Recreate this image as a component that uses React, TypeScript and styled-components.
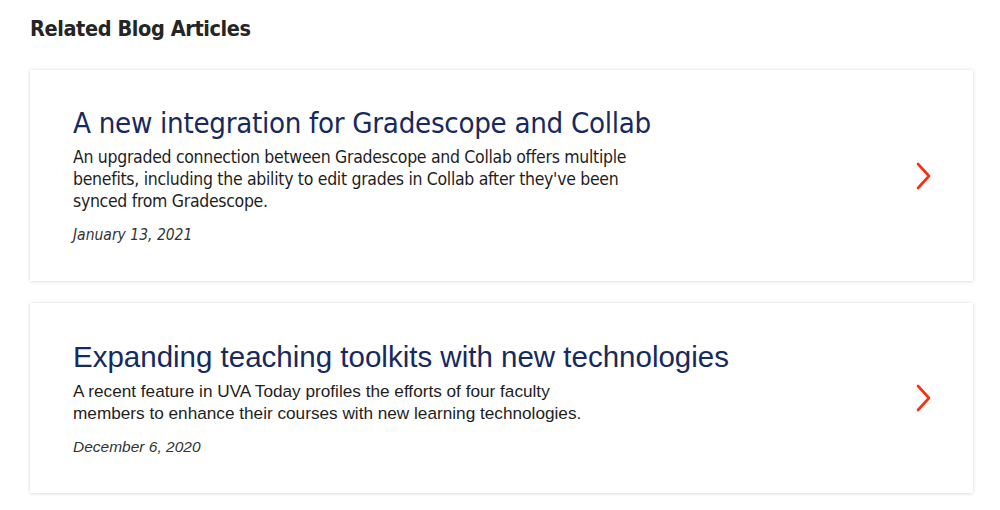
import React from "react";
import styled, { createGlobalStyle } from "styled-components";

const Global = createGlobalStyle`
  html, body { margin: 0; padding: 0; background: #ffffff; }
  body { width: 1000px; height: 510px; overflow: hidden; }
`;

const Page = styled.div`
  padding: 14px 27px 0 30px;
  display: flex;
  flex-direction: column;
`;

const Heading = styled.h2`
  margin: 0 0 26px 0;
  font-family: "DejaVu Sans Condensed", "DejaVu Sans", sans-serif;
  font-stretch: condensed;
  font-weight: 700;
  font-size: 21.5px;
  line-height: 30px;
  letter-spacing: -0.4px;
  color: #252525;
`;

const List = styled.div`
  display: flex;
  flex-direction: column;
  gap: 22px;
`;

const Card = styled.a<{ $h: number }>`
  display: flex;
  align-items: center;
  height: ${(p) => p.$h}px;
  box-sizing: border-box;
  padding: 0 40px 0 43px;
  background: #fff;
  box-shadow: 0 0 4px rgba(0, 0, 0, 0.12), 0 1px 3px rgba(0, 0, 0, 0.06);
  text-decoration: none;
`;

const Body = styled.div<{ $condensed: boolean }>`
  flex: 1;
  display: flex;
  flex-direction: column;
  font-family: ${(p) =>
    p.$condensed
      ? '"DejaVu Sans Condensed", "DejaVu Sans", sans-serif'
      : '"Liberation Sans", Arial, sans-serif'};
`;

const Title = styled.h3<{ $size: number; $ls: number }>`
  margin: 0 0 6px 0;
  font-family: inherit;
  font-weight: 400;
  font-size: ${(p) => p.$size}px;
  line-height: 34px;
  letter-spacing: ${(p) => p.$ls}px;
  color: #17295e;
`;

const Summary = styled.p<{ $size: number; $ls: number; $w: number }>`
  margin: 0 0 13px 0;
  max-width: ${(p) => p.$w}px;
  font-size: ${(p) => p.$size}px;
  line-height: 22px;
  letter-spacing: ${(p) => p.$ls}px;
  color: #1e1e1e;
`;

const DateText = styled.span<{ $size: number }>`
  font-style: italic;
  font-size: ${(p) => p.$size}px;
  line-height: 20px;
  color: #333;
`;

const Chevron = () => (
  <svg width="18" height="28" viewBox="0 0 18 28" fill="none">
    <path d="M3 2 L14 14 L3 26" stroke="#f8300f" strokeWidth="2.6" strokeLinecap="round" strokeLinejoin="round" />
  </svg>
);

const articles = [
  {
    title: "A new integration for Gradescope and Collab",
    text: "An upgraded connection between Gradescope and Collab offers multiple benefits, including the ability to edit grades in Collab after they've been synced from Gradescope.",
    date: "January 13, 2021",
    condensed: true,
    h: 211,
    ts: 29.2,
    tls: -0.3,
    bs: 17.5,
    bls: -0.3,
    w: 600,
    ds: 15.5,
  },
  {
    title: "Expanding teaching toolkits with new technologies",
    text: "A recent feature in UVA Today profiles the efforts of four faculty members to enhance their courses with new learning technologies.",
    date: "December 6, 2020",
    condensed: false,
    h: 190,
    ts: 29.5,
    tls: 0,
    bs: 17.2,
    bls: 0,
    w: 510,
    ds: 15.5,
  },
];

export default function App() {
  return (
    <>
      <Global />
      <Page>
        <Heading>Related Blog Articles</Heading>
        <List>
          {articles.map((a) => (
            <Card key={a.title} href="#" $h={a.h}>
              <Body $condensed={a.condensed}>
                <Title $size={a.ts} $ls={a.tls}>{a.title}</Title>
                <Summary $size={a.bs} $ls={a.bls} $w={a.w}>{a.text}</Summary>
                <DateText $size={a.ds}>{a.date}</DateText>
              </Body>
              <Chevron />
            </Card>
          ))}
        </List>
      </Page>
    </>
  );
}
